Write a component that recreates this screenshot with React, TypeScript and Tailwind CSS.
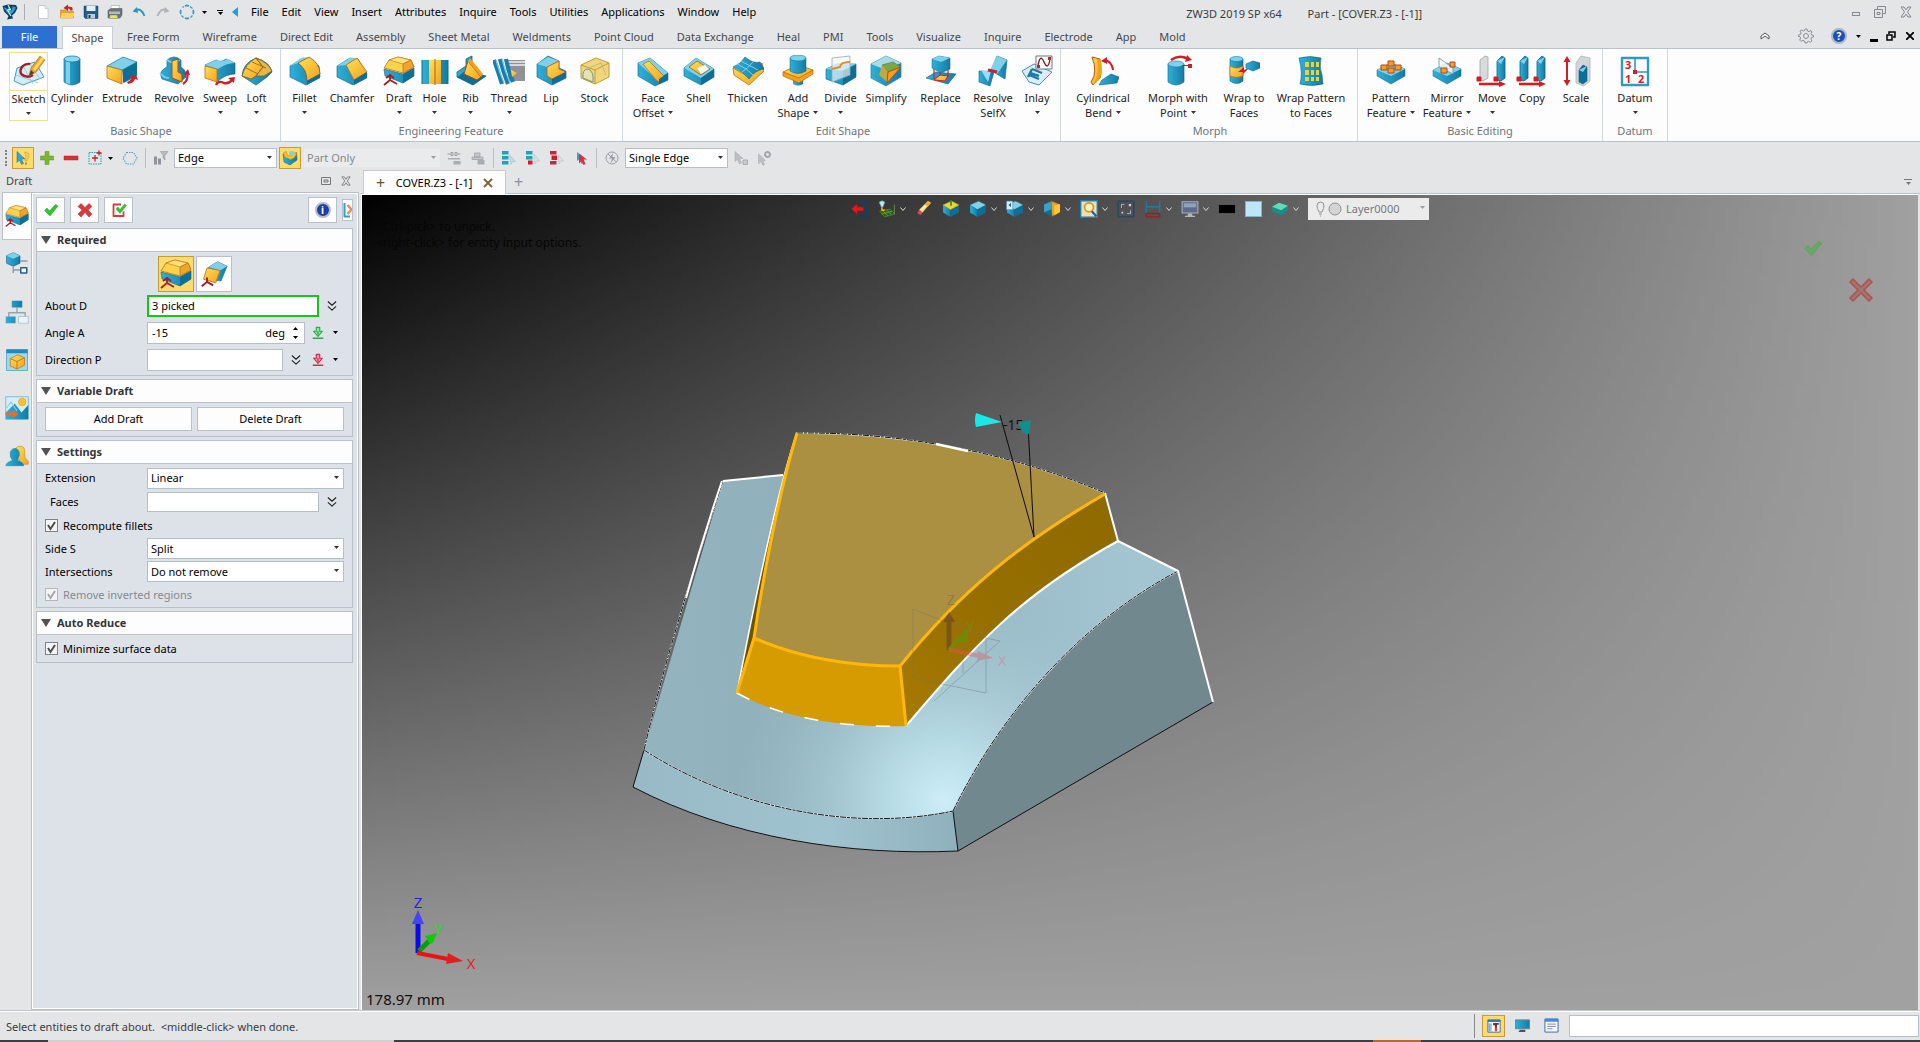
import type { ReactNode } from 'react';
import clsx from 'clsx';

// [path, fill, stroke, stroke width]
type Shape = [string, string, string?, number?];

const T = 'url(#teal)';
const Y = 'url(#gold)';
const D = '#0d6f96';
const L = '#7fd0ea';
const O = '#f2a11c';
const R = '#cf1f26';
const N = 'none';
const W = '#f4f8fb';
const G = '#9b9ea3';
const B = '#2c5f86';

const CUBE: Shape[] = [
  ['M2 9 17 2 30 9 15 17z', L, '#3f9cbd', 0.6],
  ['M2 9 15 17V30L2 22z', T],
  ['M15 17 30 9V22L15 30z', D],
];

const ICONS: Record<string, Shape[]> = {
  sketch: [
    ['M4 13 22 7 31 22 10 30 1 26z', '#d5ebf6', '#4a9cc4', 1],
    ['M3 20 25 28M10 11 20 29M17 9 27 24', N, '#8cc4de', 0.8],
    ['M17 9C11 8 6 13 8 19M8 19Q14 24 20 20', N, '#a51d26', 2.4],
    ['M16 21 18 13 27 1 32 5 23 17z', '#f2a11c', '#a0641a', 0.6],
    ['M20 14 29 2 31 4 22 16z', '#ffdc6b'],
    ['M16 21 18 15 21 18z', '#5a3a1a'],
  ],
  cylinder: [
    ['M8 4V27Q16 33 24 27V4z', T, '#0c6284', 0.6],
    ['M10 5V28L14 29V6z', L],
    ['M8 4A8 3 0 1 0 24 4A8 3 0 1 0 8 4', '#8ed9ef', '#187ca0', 0.8],
  ],
  extrude: [
    ['M1 11 17 2 31 7V21L18 28 16 15z', T],
    ['M1 11 17 2 31 7 16 15z', L, '#187ca0', 0.6],
    ['M1 11 16 15V29L1 23z', Y, '#c06a10', 0.8],
    ['M17 15 31 7V19L17 28z', D],
    ['M22 29Q28 28 29 24L32 25 30 20 23 21 26 23Q24 26 21 27z', R],
  ],
  revolve: [
    ['M9 5Q16-1 23 5V12Q29 16 28 22L20 29 4 24Q0 16 9 12z', T, '#0c6284', 0.6],
    ['M9 5Q16 10 22 5M2 18Q6 23 11 23', N, L, 1.6],
    ['M14 6 20 4V17L24 19V27L14 23z', Y, '#b3461c', 1],
    ['M25 29Q31 25 29 17', N, R, 2.2],
    ['M26 19 30 14 32 20z', R],
  ],
  sweep: [
    ['M1 10 12 5Q17 8 22 4L31 8V19Q22 19 14 26z', T, '#0c6284', 0.6],
    ['M1 10 12 5Q18 8 23 4L31 8Q22 8 14 14z', L],
    ['M1 11 13 14V27L1 23z', Y, '#c06a10', 0.8],
    ['M12 30Q14 25 20 28 25 29 28 25', N, R, 2.4],
    ['M24 23 31 22 30 28z', R],
  ],
  loft: [
    ['M1 21Q2 8 15 3 29 7 31 17L26 22 15 30z', T, '#0c6284', 0.7],
    ['M1 21Q4 9 15 3L22 12 15 21 10 24z', Y, '#8a5a14', 0.8],
    ['M15 3Q27 7 31 16L23 21 15 21 22 12z', '#e6b64a', '#8a5a14', 0.8],
    ['M5 13 17 19M11 7 25 13', N, '#8a5a14', 0.8],
  ],
  fillet: [
    ['M1 11 14 3 30 11 31 22 17 30 1 22z', T, '#0c6284', 0.6],
    ['M1 11 12 3 20 2 9 8z', L],
    ['M9 8 20 2Q31 8 31 19L18 26Q18 14 9 8z', Y, '#8a5a14', 0.8],
    ['M18 26 31 19V23L18 30z', D],
  ],
  chamfer: [
    ['M1 11 14 3 22 4 31 19 30 23 17 30 1 22z', T, '#0c6284', 0.6],
    ['M1 11 14 3 21 3 10 10z', L],
    ['M10 10 21 3 31 17 18 25z', Y, '#b36a1c', 0.8],
    ['M18 25 31 17V23L18 30z', D],
  ],
  draft: [
    ['M1 14 20 19 31 13V21L20 28 2 21z', T, '#0c6284', 0.6],
    ['M20 19 31 13V21L20 28z', D],
    ['M1 13 6 5 15 2 28 5 31 12 20 18z', '#ffd24a', '#b3701c', 0.8],
    ['M6 5 15 2 28 5 20 9z', '#ffe27a', '#c0822a', 0.7],
    ['M20 9 28 5 31 12 20 18z', '#f0a52a', '#b3701c', 0.7],
    ['M7 19V25M7 25 1 30M7 25 14 29M3 23 7 20 11 23', N, '#a51d26', 1.8],
  ],
  hole: [
    ['M3 5H29V29H3z', T],
    ['M10 5H22V29H10z', Y],
    ['M16 4V30', N, '#a06a12', 1],
    ['M3 5V29M29 5V29', N, D, 1],
  ],
  rib: [
    ['M11 4 17 1V19L31 21 18 30 2 22V17L11 11z', T, '#0c6284', 0.8],
    ['M2 22 13 14 31 21 18 30z', D],
    ['M13 6 26 22 22 25 9 19z', Y, '#b3461c', 1],
    ['M15 3 28 19 26 22 13 6z', O],
  ],
  thread: [
    ['M15 5H32V26H15z', '#8d9399'],
    ['M15 7H32M15 10H32', N, '#d5d9dc', 2],
    ['M1 5Q5 16 9 29M7 4Q10 16 15 29M13 4Q15 16 20 27', N, '#177fae', 4.2],
    ['M3 5Q6 16 11 28M9 4Q12 16 17 28', N, '#7cc8e8', 1.2],
    ['M18 15 24 18 19 22z', Y],
  ],
  lip: [
    ['M2 9 13 1 24 6V13L31 16V23L17 30 2 22z', T, '#0c6284', 0.6],
    ['M2 9 13 2 24 6 12 12z', L],
    ['M12 12 24 6V14L31 17 17 24 12 21z', Y, '#c26012', 0.9],
    ['M17 24 31 17V23L17 30z', D],
  ],
  stock: [
    ['M2 10 17 3 30 8V22L16 29 2 23z', '#f0d57c', '#c69a32', 1],
    ['M2 10 16 15 30 8M16 15V29', N, '#c69a32', 1],
    ['M4 23Q3 14 9 14 15 16 14 27z', '#e9e0b4', '#6f9a8a', 1],
    ['M10 13 22 8 27 20', N, '#a6b48a', 0.8],
  ],
  faceOffset: [
    ['M1 8 13 3 31 18V25L18 31 1 21z', T, '#0c6284', 0.6],
    ['M1 8 13 3 31 18 19 24z', L],
    ['M6 9 12 6 27 21 22 27 19 25z', Y, '#b3701c', 0.8],
    ['M22 24 31 18V25L22 29z', D],
  ],
  shell: [
    ['M1 13 13 3 31 14V22L18 30 1 21z', T, '#0c6284', 0.6],
    ['M1 13 13 3 31 14 18 23z', L],
    ['M6 12 14 6 27 14 18 20z', Y, '#a55b12', 0.8],
    ['M14 13 22 10 26 14 18 19z', W],
    ['M18 23 31 14V22L18 30z', D],
  ],
  thicken: [
    ['M1 13 17 22 30 8 32 16 17 30 2 20z', Y, '#c06a10', 0.8],
    ['M1 12Q9 9 13 2 21 9 28 7L32 14Q23 15 17 24 12 17 1 12z', T, '#0c6284', 0.6],
    ['M5 9Q15 13 21 20M9 6Q18 11 26 15M22 6Q15 14 10 17', N, '#9adcf2', 0.8],
  ],
  addShape: [
    ['M11 18V29Q16 32 21 29V18z', T],
    ['M1 17 16 10 31 15 17 24z', Y, '#c06a10', 0.8],
    ['M1 17 17 23 31 15V19L17 28 1 21z', O, '#b5550f', 0.6],
    ['M8 3V16Q16 21 24 16V3z', T, '#0c6284', 0.5],
    ['M8 3A8 3 0 1 0 24 3A8 3 0 1 0 8 3', L, '#187ca0', 0.6],
  ],
  divide: [
    ['M1 14 12 9 31 9V22L18 30 1 24z', T, '#0c6284', 0.6],
    ['M1 14 12 9 31 9 17 16z', L],
    ['M18 16 31 10V22L18 30z', D],
    ['M7 3 25 1V20L7 27z', '#f4f8fbaa', '#9aa7b2', 0.8],
    ['M7 14 15 12Q15 7 25 7', N, '#e28c2b', 2],
  ],
  simplify: [
    ['M1 9 16 1 31 8V22L16 31 1 23z', T, '#3a8cab', 0.8],
    ['M1 9 16 1 31 8 16 15z', '#a8dbea'],
    ['M12 10 23 7 31 12 18 17z', '#7aa64a', '#4e8a30', 0.7],
    ['M12 10 18 17 17 27 9 20z', '#c6a640'],
    ['M18 17 31 12 17 28z', O, '#c14a14', 1],
  ],
  replace: [
    ['M1 23 11 17 31 19 23 29z', T, '#0c6284', 0.6],
    ['M9 25 15 20 23 21 20 26z', Y, R, 1],
    ['M9 13V24M23 13V22M15 16V20', N, R, 1.2],
    ['M7 4 14 1 25 3V14L16 18 7 13z', T, '#0c6284', 0.5],
    ['M7 4 14 1 25 3 16 7z', L],
  ],
  resolve: [
    ['M2 16 17 17 13 31 2 27z', T, '#0c6284', 0.6],
    ['M15 13 20 1 30 5 28 24 18 18z', T, '#0c6284', 0.6],
    ['M20 1 30 5 20 19 13 15z', L],
    ['M4 15 14 16 11 27z', '#9adcf2'],
    ['M11 15 20 17', N, R, 3],
  ],
  inlay: [
    ['M1 16 13 9 31 17 18 30 8 27z', '#d9eef8', '#3f90b5', 1],
    ['M11 14 21 18M8 20 18 24M11 14 8 20 7 22M9 18 18 21', N, '#1d7ba6', 2.4],
    ['M15 1H31V14H15z', '#fff', '#6d7780', 1],
    ['M17 11Q19-2 23 7T29 4', N, '#7a1f2c', 1.4],
    ['M16 10H19V13H16zM27 2H30V5H27z', R],
  ],
  bend: [
    ['M15 25 24 19 32 22 30 28 12 30z', T, '#0c6284', 0.6],
    ['M5 2 13 4Q15 18 13 23L6 30 4 27Q11 17 5 2z', Y, '#b5550f', 1],
    ['M10 4 14 5Q16 18 12 25L6 30Q13 18 10 4z', O],
    ['M17 5Q25 6 26 15', N, R, 2],
    ['M14 6 20 2 20 9z', R],
  ],
  morph: [
    ['M6 9V27Q14 33 22 27V9z', T, '#0c6284', 0.6],
    ['M6 9A8 3 0 1 0 22 9A8 3 0 1 0 6 9', L, '#187ca0', 0.6],
    ['M9 5Q17-1 26 4', N, R, 2.6],
    ['M25 0 30 5 23 7z', R],
    ['M26 9H30V13H26zM20 10H28V11H20z', R],
  ],
  wrap: [
    ['M2 4V26Q9 31 15 26V4z', T, '#0c6284', 0.6],
    ['M2 4A6.5 2.500 0 1 0 15 4A6.500 2.500 0 1 0 2 4', L, '#187ca0', 0.6],
    ['M2 11Q9 15 15 11V21Q9 24 2 21z', Y, '#b5550f', 0.6],
    ['M10 17 16 12V15L21 13 15 19V17z', R],
    ['M18 9 25 6 32 8V13L25 16 18 13z', T, '#0c6284', 0.6],
  ],
  wrapPattern: [
    ['M4 3Q15 0 26 3 24 12 27 20L28 29Q16 32 5 29 8 18 4 3z', T, '#0c6284', 0.6],
    ['M10 7H14V12H10zM16 7H19V12H16zM21 7H24V12H21zM10 15H14V20H10zM16 15H19V20H16zM21 15H24V20H21zM10 22H14V26H10zM16 22H19V26H16zM21 22H24V26H21z', '#e5d53c'],
  ],
  pattern: [
    ['M2 15 16 8 30 14V21L16 29 2 21z', T, '#0c6284', 0.5],
    ['M2 15 16 8 30 14 16 21z', L],
    ['M13 6H19V11H13zM6 10H12V15H6zM20 10H26V15H20zM13 13H19V18H13z', O, '#b3461c', 1],
  ],
  mirror: [
    ['M2 15 16 8 30 14V21L16 29 2 21z', T, '#0c6284', 0.5],
    ['M2 15 16 8 30 14 16 21z', L],
    ['M8 3 22 13V19L8 12z', '#f4f8fbcc', '#6f8fa3', 0.8],
    ['M10 13H16V18H10zM19 7H24V12H19z', O, '#b3461c', 1],
  ],
  move: [
    ['M4 5 9 1 12 2V23L7 26 4 25z', '#d8dadd', '#9ea2a6', 0.8],
    ['M21 6 26 1 29 3V23L25 26 21 25z', T, '#0c6284', 0.8],
    ['M21 6 29 2 25 9z', L],
    ['M1 22H5V26H1zM18 22H22V26H18z', R, R, 1],
    ['M3 29H24', N, R, 2.6],
    ['M23 26 30 29 23 32z', R],
  ],
  copy: [
    ['M4 6 9 1 12 3V23L8 26 4 25z', T, '#0c6284', 0.8],
    ['M21 6 26 1 29 3V23L25 26 21 25z', T, '#0c6284', 0.8],
    ['M4 6 12 2 8 9zM21 6 29 2 25 9z', L],
    ['M1 22H5V26H1zM18 22H22V26H18z', R, R, 1],
    ['M3 29H24', N, R, 2.6],
    ['M23 26 30 29 23 32z', R],
  ],
  scale: [
    ['M7 4V28', N, R, 2],
    ['M3.500 7 7 1 10.500 7zM3.500 25 7 31 10.500 25z', R],
    ['M16 8 21 1 30 3V26L24 31 16 28z', '#d3d6d9', '#aeb2b6', 0.8],
    ['M19 15 23 10 27 12V26L23 29 19 27z', D, '#0c6284', 0.6],
    ['M19 15 27 11 23 17z', L],
  ],
  datum: [
    ['M3 3H29V30H3z', '#fff', '#2d9bc4', 2.4],
    ['M16 3V17H29', N, '#2d9bc4', 1.6],
    ['M14 15H18V19H14z', R],
  ],
  newDoc: [['M7 3H20L26 9V29H7z', '#fff', '#b6bcc3', 1.4], ['M20 3V9H26', '#e4e8ec', '#b6bcc3', 1.2]],
  open: [
    ['M3 12H13L16 15H29V28H3z', O, '#c07a14', 1],
    ['M6 18H31L28 28H3z', '#ffd25c'],
    ['M27 13V8Q26 5 18 5V1L9 8 18 14V9Q22 9 23 13z', R],
  ],
  save: [
    ['M2 4H30V29H5L2 26z', '#1f5f86', '#123f5c', 1],
    ['M7 4H25V14H7z', '#dff0f8'],
    ['M9 20H24V29H9z', '#c3cbd2'],
    ['M11 22H15V28H11z', '#1f3f5c'],
  ],
  print: [
    ['M9 3H25L23 12H6z', '#fff', '#8c9298', 1],
    ['M2 13 8 9H30V22L26 28H2z', '#6c7278', '#4c5258', 1],
    ['M4 15H26V20H4z', '#b4babf'],
    ['M6 22H20L22 29H5z', '#dfe86a', '#7a8288', 1],
  ],
  undo: [['M8 13Q20 6 27 24', N, '#2b94bd', 3.6], ['M3 15 12 6 14 18z', '#2b94bd']],
  redo: [['M24 13Q12 6 5 24', N, '#b0b4b8', 3.6], ['M29 15 20 6 18 18z', '#b0b4b8']],
  ring: [
    ['M12 4Q16 2 20 4M4 12Q2 16 4 20M28 12Q30 16 28 20M12 28Q16 30 20 28', N, '#3f9cbd', 3.6],
    ['M7 7 10 5M22 5 27 9M27 23 23 27M9 27 5 23', N, '#3f9cbd', 2.6],
  ],
  logo: [
    ['M1 4 12 1 28 2 31 8 26 18 20 23 22 29 10 31 13 24 4 15z', '#13405c'],
    ['M3 6 13 11 12 4 20 13 21 5 28 7 22 17 15 22 8 14z', '#2aa4d4'],
    ['M12 2 17 11 11 12 18 24', N, '#fff', 2],
  ],
  pick: [
    ['M4 3 4 25 9 20 13 29 17 27 13 18 20 18z', '#32a7d8', '#1b6f98', 1],
    ['M19 4Q29 4 28 12 27 17 24 19V22H20V18L22 12z', '#f7cf4a', '#c7962a', 1],
    ['M20 25H24V29H20z', '#b8862a'],
  ],
  plus: [['M12 3H20V12H29V20H20V29H12V20H3V12H12z', '#7cb52f', '#5f9420', 1]],
  minus: [['M2 12H30V20H2z', '#d9322f', '#b52220', 1]],
  region: [
    ['M4 5H28V28H4z', N, '#2b94bd', 2],
    ['M16 10V23M10 16H22', N, R, 2.6],
    ['M24 1V11M19 6H29', N, R, 2.6],
  ],
  hexagon: [['M9 5H23L30 16 23 28H9L2 16z', N, '#49a3c4', 2.2]],
  filter: [
    ['M2 13H8V29H2zM10 17H16V29H10z', '#8f9398'],
    ['M15 3H30L24 11V20L20 16V11z', '#b6babe', '#8f9398', 1],
  ],
  layers: [
    ['M2 8 9 14 16 12 29 5 30 20 16 30 4 24z', T, '#0c6284', 1],
    ['M3 5 9 3 11 12 20 10 18 4 30 7 24 16 17 19 5 14z', '#f3c12a', '#b98518', 1],
    ['M14 3 24 2 22 10 15 12z', L],
  ],
  link: [['M3 8H10M22 8H29M10 5H14V11H10zM18 5H22V11H18z', N, G, 2], ['M4 16H28V19H4zM15 22H29V29H15z', '#a9acb0']],
  print2: [['M9 6H20V14H9zM4 14H26V19H4z', '#c3c6c9', G, 1.4], ['M15 20H29V29H15z', '#a9acb0']],
  treeA: [['M2 2H15V9H2zM2 12H15V19H2zM2 22H15V29H2z', '#22a0b8'], ['M17 10 29 23 23 23 20 29z', '#c9dbe0', '#86bcc9', 1]],
  treeB: [['M2 2H15V9H2zM2 12H15V19H2z', '#22a0b8'], ['M6 21H15V29H6z', R], ['M18 8 29 22 23 22 20 28z', '#dce1e4', '#b2b8bc', 1]],
  treeC: [['M2 2H15V9H2zM2 22H15V29H2z', '#b4304a'], ['M5 11H16V20H5z', R], ['M19 10 29 22 23 22 20 28z', '#dce1e4', '#b2b8bc', 1]],
  redPick: [['M8 4V22L13 18 17 28 21 26 17 17 24 17z', '#2fa7cd'], ['M12 7V27L17 22 21 30 25 28 21 19 28 19z', '#d83040']],
  noFilter: [['M16 4A12 12 0 1 0 16 28A12 12 0 1 0 16 4M8 8 25 24', N, G, 2], ['M18 6 10 17H16L13 27 23 14H17z', G]],
  cursorGrey: [['M4 3V23L9 19 13 28 17 26 13 17 20 17z', '#bcbec1', '#a6a9ad', 1], ['M20 20H29V29H20z', '#c9cbce', G, 1.500]],
  cursorGear: [['M3 8V28L8 23 12 31 15 29 12 21 17 21z', '#bcbec1', '#a6a9ad', 1], ['M21 4A5 5 0 1 0 21.100 4z', N, '#a2a5a8', 4]],
  check: [['M3 17 8 12 13 18 25 5 30 8 14 28z', '#2fc42f', '#1f9a26', 1]],
  cross: [['M8 3 16 11 24 3 30 9 22 16 30 24 24 30 16 21 8 30 2 24 10 16 2 9z', '#d93a3c', '#b42226', 1]],
  apply: [['M20 5H5V28H25V19', N, '#dc3a3e', 3.6], ['M10 14 14 10 18 15 27 4 31 7 18 23z', '#2fc42f', '#1f9a26', 0.8]],
  chevrons: [['M5 4 16 14 27 4M5 17 16 27 27 17', N, '#222', 3]],
  downGreen: [['M12 3H20V12H26L16 24 6 12H12z', '#8be896', '#2fa845', 2.6], ['M4 28H28M16 12V20', N, '#2fa845', 3]],
  downRed: [['M12 3H20V12H26L16 24 6 12H12z', '#ef9ba6', '#d22c48', 2.6], ['M4 28H28M16 12V20', N, '#d22c48', 3]],
  panel: [['M3 2V29H14', N, '#2d9fc9', 4], ['M9 6 17 15 9 24', N, '#ee8a4c', 5]],
  tree: [
    ['M2 5 11 1 20 5V15L11 19 2 15z', T, '#0c6284', 0.8],
    ['M2 5 11 1 20 5 11 9z', L],
    ['M11 19V28M11 24H20M20 12H30', N, '#8e9aa6', 1.8],
    ['M21 21H29V28H21z', '#fff', B, 2],
  ],
  org: [
    ['M16 10V17M5 24V17H27V24', N, '#9aa2aa', 1.800],
    ['M9 1H23V10H9zM1 22H14V31H1z', T],
    ['M18 22H31V31H18z', '#e9f3f8', '#9fbccb', 1],
  ],
  window: [
    ['M2 2H30V30H2z', '#9fd8ec', '#3fa0c4', 1],
    ['M2 2H30V7H2z', '#1a8db8'],
    ['M7 14 17 9 26 13V23L16 28 7 24z', Y, '#c0741a', 1],
    ['M7 14 16 18 26 13M16 18V28', N, '#c0741a', 1.2],
  ],
  scene: [
    ['M1 1H31V31H1z', '#d4eefa', '#5ab0d4', 1],
    ['M1 22 13 10 22 22 31 12V31H1z', T],
    ['M2 16 8 8 16 20', N, '#8cc9e0', 1.6],
    ['M18 8A5 5 0 1 0 28 8A5 5 0 1 0 18 8', '#ffc02e', O, 1],
    ['M1 22H10V18L18 24 10 30V26H1z', '#ee6a2a'],
  ],
  people: [
    ['M14 6Q16 2 22 3 28 5 26 13 25 18 31 23V27H22L17 18z', Y, '#d2801c', 0.8],
    ['M7 11Q9 5 15 6 20 9 19 15 17 20 17 22 24 24 25 29H1Q2 24 10 22 6 17 7 11z', T, '#2a86a8', 0.800],
  ],
  face: [
    ['M10 8 20 2 31 7 24 24 9 22z', T, '#0c6284', 0.6],
    ['M10 8 20 2 31 7 23 12z', L],
    ['M8 9 23 12 18 26 4 22z', Y, '#c0741a', 1],
    ['M8 20V25M8 25 2 30M8 25 15 29', N, '#a51d26', 2.2],
  ],
  exit: [['M14 3H27V29H14', N, '#113f66', 3], ['M1 16 11 7V13H22V19H11V25z', '#ee1414']],
  tag: [
    ['M3 20 21 16 30 25 12 30z', '#2f5a20', '#4d8a26', 1.4],
    ['M8 19 18 28M15 18 24 26M6 25 25 20M29 8V25', N, '#6cae34', 1.4],
    ['M2 4Q8-1 12 4L9 12 6 13z', '#bfe3f2', '#4d97b8', 1],
    ['M7 13V18L12 18', N, O, 3],
  ],
  eraser: [['M4 23 10 27 13 22 8 17z', '#e04848'], ['M8 17 13 22 28 5 23 2z', '#f8e8a4', '#d6b85c', 1], ['M18 8 23 12 27 6 23 2z', '#f3a72a']],
  yellowBox: [...CUBE, ['M2 9 17 2 30 9 15 17z', '#e8d830', '#b8a018', 1], ['M16 0V10', N, '#46802a', 3]],
  cube: CUBE,
  views: [...CUBE, ['M1 2H12V17H1z', '#dceef6', '#4d97b8', 1], ['M9 5 4 9 9 13z', '#29719c']],
  section: [['M2 8 15 2V17L2 22z', '#34a4cf'], ['M15 2 30 8V22L16 29 15 17z', O, '#b96812', 1], ['M20 10 30 7V21L20 27z', '#ffc93c'], ['M2 22 15 17 16 29z', D]],
  zoom: [['M1 1H31V31H1z', '#e9e0b8', '#1e7fb0', 3], ['M8 13A8 8 0 1 0 24 13A8 8 0 1 0 8 13', '#fff1b8', '#d99520', 3], ['M21 20 29 29', N, '#2c5aa0', 4]],
  fit: [['M2 2H30V30H2z', N, '#22485e', 2.4], ['M8 14V8H13M24 18V24H18', N, '#8fb4c6', 1.800], ['M21 7H25V11H21zM8 21H11V24H8z', '#bfd8e4']],
  measure: [['M4 2V24M28 2V24M4 12H28', N, '#1e7ca6', 2.4], ['M4 24H28V30H4z', N, '#a01c22', 2.4]],
  monitor: [['M2 3H30V23H2z', '#5c6d8c', '#a9adb4', 2], ['M5 6H27V13H5z', '#8fa3c0'], ['M12 24H20V28H25V30H7V28H12z', '#b4b7bb']],
  green: [['M2 12 14 5 30 10V18L18 27 2 20z', '#1c8c86'], ['M2 12 14 5 30 10 18 18z', '#5fdcb4']],
  screen: [['M1 4H31V23H1z', T, '#74808a', 2], ['M10 25H22V30H8V27H10z', '#4d5358']],
  tools: [['M2 2H30V30H2z', '#fff', '#2c5fa8', 2], ['M2 2H30V7H2z', '#3f74c0'], ['M5 10V28M9 10V28', N, '#3f74c0', 2], ['M14 9H27V13H23V26H18V14H14z', '#5b3a34'], ['M18 18H23V28H18z', '#d6402a']],
  list: [['M2 2H30V30H2z', '#f4f8fd', '#3566b0', 2], ['M2 2H30V8H2z', '#4f86d0'], ['M7 13H25M7 18H25M7 23H18', N, '#6b7c98', 1.800]],
};

function Icon({ name, className = 'size-4' }: { name: string; className?: string }) {
  return (
    <svg viewBox="0 0 32 32" className={clsx('shrink-0', className)} aria-hidden="true">
      {ICONS[name].map(([d, fill, stroke, width], i) => (
        <path
          key={i}
          d={d}
          fill={fill}
          stroke={stroke}
          strokeWidth={width}
          strokeLinejoin="round"
          strokeDasharray={name === 'hexagon' || (name === 'region' && i === 0) ? '3 2' : undefined}
        />
      ))}
      {name === 'datum' && (
        <g fill={R} fontSize="11" fontWeight="700" fontFamily="Open Sans, sans-serif">
          <text x="6" y="14">3</text>
          <text x="6" y="28">1</text>
          <text x="19" y="28">2</text>
        </g>
      )}
    </svg>
  );
}

function Caret({ className }: { className?: string }) {
  return (
    <svg viewBox="0 0 5 3" className={clsx('h-[3px] w-[5px] shrink-0', className)} aria-hidden="true">
      <path d="M0 0h5L2.500 3z" fill="currentColor" />
    </svg>
  );
}

function Sep() {
  return <span className="mx-0.5 h-5 w-px shrink-0 bg-[#b9bec4]" />;
}

const MENUS = ['File', 'Edit', 'View', 'Insert', 'Attributes', 'Inquire', 'Tools', 'Utilities', 'Applications', 'Window', 'Help'];

const TABS = [
  'Free Form', 'Wireframe', 'Direct Edit', 'Assembly', 'Sheet Metal', 'Weldments', 'Point Cloud', 'Data Exchange',
  'Heal', 'PMI', 'Tools', 'Visualize', 'Inquire', 'Electrode', 'App', 'Mold',
];

type Tool = { icon: string; label: string; second?: string; menu?: boolean; w: string };

const RIBBON: { title: string; pad: string; tools: Tool[] }[] = [
  {
    title: 'Basic Shape',
    pad: 'pl-[9px] pr-[7px]',
    tools: [
      { icon: 'sketch', label: 'Sketch', menu: true, w: 'w-[39px]' },
      { icon: 'cylinder', label: 'Cylinder', menu: true, w: 'w-12' },
      { icon: 'extrude', label: 'Extrude', w: 'w-[52px]' },
      { icon: 'revolve', label: 'Revolve', w: 'w-[52px]' },
      { icon: 'sweep', label: 'Sweep', menu: true, w: 'w-10' },
      { icon: 'loft', label: 'Loft', menu: true, w: 'w-[33px]' },
    ],
  },
  {
    title: 'Engineering Feature',
    pad: 'pl-[5px] pr-1.5',
    tools: [
      { icon: 'fillet', label: 'Fillet', menu: true, w: 'w-[37px]' },
      { icon: 'chamfer', label: 'Chamfer', w: 'w-[58px]' },
      { icon: 'draft', label: 'Draft', menu: true, w: 'w-9' },
      { icon: 'hole', label: 'Hole', menu: true, w: 'w-[35px]' },
      { icon: 'rib', label: 'Rib', menu: true, w: 'w-[37px]' },
      { icon: 'thread', label: 'Thread', menu: true, w: 'w-10' },
      { icon: 'lip', label: 'Lip', w: 'w-11' },
      { icon: 'stock', label: 'Stock', w: 'w-[43px]' },
    ],
  },
  {
    title: 'Edit Shape',
    pad: 'pl-[7px] pr-1',
    tools: [
      { icon: 'faceOffset', label: 'Face', second: 'Offset', menu: true, w: 'w-[46px]' },
      { icon: 'shell', label: 'Shell', w: 'w-[45px]' },
      { icon: 'thicken', label: 'Thicken', w: 'w-[53px]' },
      { icon: 'addShape', label: 'Add', second: 'Shape', menu: true, w: 'w-12' },
      { icon: 'divide', label: 'Divide', menu: true, w: 'w-[37px]' },
      { icon: 'simplify', label: 'Simplify', w: 'w-[54px]' },
      { icon: 'replace', label: 'Replace', w: 'w-[55px]' },
      { icon: 'resolve', label: 'Resolve', second: 'SelfX', w: 'w-[50px]' },
      { icon: 'inlay', label: 'Inlay', menu: true, w: 'w-[38px]' },
    ],
  },
  {
    title: 'Morph',
    pad: 'pl-[7px] pr-[5px]',
    tools: [
      { icon: 'bend', label: 'Cylindrical', second: 'Bend', menu: true, w: 'w-[70px]' },
      { icon: 'morph', label: 'Morph with', second: 'Point', menu: true, w: 'w-20' },
      { icon: 'wrap', label: 'Wrap to', second: 'Faces', w: 'w-[52px]' },
      { icon: 'wrapPattern', label: 'Wrap Pattern', second: 'to Faces', w: 'w-[82px]' },
    ],
  },
  {
    title: 'Basic Editing',
    pad: 'px-[5px]',
    tools: [
      { icon: 'pattern', label: 'Pattern', second: 'Feature', menu: true, w: 'w-14' },
      { icon: 'mirror', label: 'Mirror', second: 'Feature', menu: true, w: 'w-14' },
      { icon: 'move', label: 'Move', menu: true, w: 'w-[34px]' },
      { icon: 'copy', label: 'Copy', w: 'w-[46px]' },
      { icon: 'scale', label: 'Scale', w: 'w-[42px]' },
    ],
  },
  { title: 'Datum', pad: 'px-1', tools: [{ icon: 'datum', label: 'Datum', menu: true, w: 'w-14' }] },
];

function TitleBar() {
  const quick = ['newDoc', 'open', 'save', 'print', 'undo', 'redo', 'ring'];
  return (
    <header className="flex h-6 items-center text-black">
      <Icon name="logo" className="ml-0.5 size-4" />
      <span className="mx-[6px] h-4 w-px bg-[#a9aeb4]" />
      {quick.map((name) => (
        <button key={name} type="button" aria-label={name} className="flex w-6 justify-center">
          <Icon name={name} />
        </button>
      ))}
      <Caret className="mr-1 ml-[3px]" />
      <button type="button" aria-label="Customize" className="mx-1 flex flex-col items-center gap-px px-0.5">
        <span className="h-px w-1.5 bg-black" />
        <Caret />
      </button>
      <svg viewBox="0 0 6 10" className="ml-[3px] h-2.5 w-1.5" aria-hidden="true">
        <path d="M6 0v10L0 5z" fill="#1a9fe0" />
      </svg>
      <nav className="ml-[13px] flex gap-[13px]">
        {MENUS.map((m) => (
          <button key={m} type="button">{m}</button>
        ))}
      </nav>
      <div className="flex-1 pt-1 text-center whitespace-pre text-[#3c3c3c]">
        {'ZW3D 2019 SP x64         Part - [COVER.Z3 - [-1]]'}
      </div>
      <div className="flex items-center gap-3.5 pr-2 text-[#85898e]">
        <button type="button" aria-label="Minimize" className="mt-1 h-1 w-2 border border-current" />
        <button type="button" aria-label="Restore">
          <svg viewBox="0 0 12 12" className="size-3" fill="none" stroke="currentColor">
            <path d="M3.500 3V.5h8v7H9M.5 3.500h8v8h-8zM3 6.500h3v2H3z" />
          </svg>
        </button>
        <button type="button" aria-label="Close">
          <svg viewBox="0 0 12 12" className="size-3" fill="none" stroke="currentColor">
            <path d="M1 1h3l2 3 2-3h3L7.500 6 11 11H8L6 8l-2 3H1l3.500-5z" />
          </svg>
        </button>
      </div>
    </header>
  );
}

function RibbonTabs() {
  return (
    <div className="flex h-6 items-end pl-0.5 text-[#45484d]">
      <button type="button" className="h-[22px] w-[55px] bg-[#2f6fd0] text-white">File</button>
      <button type="button" className="z-10 -mb-px ml-[5px] h-[23px] w-[51px] border-t border-r border-l border-[#c8ced4] bg-[#fdfdfd]">
        Shape
      </button>
      <div className="ml-[3px] flex gap-px">
        {TABS.map((t) => (
          <button key={t} type="button" className="h-[22px] px-[11px] whitespace-nowrap">{t}</button>
        ))}
      </div>
      <div className="ml-auto flex h-6 items-center pr-1.5 text-black">
        <button type="button" aria-label="Collapse ribbon" className="mr-7">
          <svg viewBox="0 0 10 8" className="h-2 w-2.5" fill="#fff" stroke="#555">
            <path d="M1 4 5 1l4 3v3L5 4 1 7z" />
          </svg>
        </button>
        <button type="button" aria-label="Settings" className="mr-[17px]">
          <svg viewBox="0 0 16 16" className="size-4" fill="none" stroke="#8b8f94">
            <circle cx="8" cy="8" r="2.500" />
            <path d="M7 1h2l.5 2 1.500.6L13 2.500 14 4l-1 1.500.6 1.500 1.900.5v1.500l-2 .5-.6 1.500 1 2-1.400 1.300-2-1-1.300.6L9 15H7l-.5-2-1.500-.6-2 1L1.700 12l1-2L2 8.800l-1.500-.3V7l2-.5.600-1.500L2 3.200 3.400 2l2 1L6.500 2.600z" />
          </svg>
        </button>
        <button type="button" aria-label="Help" className="flex size-4 items-center justify-center rounded-full border-2 border-[#a9b6cc] bg-[#1f4fb4] text-[10px] font-bold text-white">
          ?
        </button>
        <Caret className="mx-[9px]" />
        <button type="button" aria-label="Minimize document" className="mt-2 h-[3px] w-2 bg-black" />
        <button type="button" aria-label="Restore document" className="mr-2.5 ml-2">
          <svg viewBox="0 0 10 10" className="size-2.5" fill="none" stroke="#000" strokeWidth="1.500">
            <path d="M3 3V1h6v5H7M1 4h5v5H1z" />
          </svg>
        </button>
        <button type="button" aria-label="Close document">
          <svg viewBox="0 0 8 8" className="size-2" stroke="#000" strokeWidth="1.800">
            <path d="m0 0 8 8M8 0 0 8" />
          </svg>
        </button>
      </div>
    </div>
  );
}

function ToolButton({ tool }: { tool: Tool }) {
  const { icon, label, second, menu, w } = tool;
  const active = icon === 'sketch';
  return (
    <button
      type="button"
      className={clsx(
        'flex h-[69px] flex-col items-center border pt-0.5 leading-[15px] whitespace-nowrap text-[#1e1e1e]',
        active ? 'border-[#f3df8e]' : 'border-transparent',
        w,
      )}
    >
      <Icon name={icon} className="size-8" />
      <span className={clsx('mt-[3px] self-stretch text-center', active && 'border-t border-[#f3df8e]')}>
        <span className="-mx-2">{label}</span>
      </span>
      <span className="flex h-[15px] items-center gap-1">
        {second}
        {menu && <Caret className="text-[#333]" />}
      </span>
    </button>
  );
}

function Ribbon() {
  return (
    <div className="flex h-[94px] border-y border-[#b7c3cc] bg-[#fdfdfd]">
      {RIBBON.map(({ title, pad, tools }) => (
        <section key={title} className={clsx('flex flex-col border-r border-[#d0d8df] pt-[3px]', pad)}>
          <div className="flex">
            {tools.map((t) => (
              <ToolButton key={t.label} tool={t} />
            ))}
          </div>
          <h2 className="text-center leading-5 text-[#70747c]">{title}</h2>
        </section>
      ))}
    </div>
  );
}

function Select({ value, label, className, disabled }: { value: string; label: string; className?: string; disabled?: boolean }) {
  return (
    <span className={clsx('relative block', className)}>
      <select
        aria-label={label}
        disabled={disabled}
        className={clsx(
          'block h-full w-full appearance-none border px-[3px]',
          disabled ? 'border-[#e3e5e7] bg-[#e9ebec] text-[#85888d]' : 'border-[#b5bfc9] bg-white text-black',
        )}
      >
        <option>{value}</option>
      </select>
      <Caret className={clsx('pointer-events-none absolute top-2 right-[5px]', disabled ? 'text-[#9a9da1]' : 'text-[#333]')} />
    </span>
  );
}

function ToolIcon({ name, on }: { name: string; on?: boolean }) {
  return (
    <button
      type="button"
      aria-label={name}
      className={clsx('flex size-[22px] shrink-0 items-center justify-center', on && 'border border-[#c99a3a] bg-[#fbdc6c]')}
    >
      <Icon name={name} />
    </button>
  );
}

function PickBar() {
  return (
    <div className="flex h-7 items-center gap-0.5 pt-1 pl-[5px]">
      <span className="mr-[3px] h-4 border-l-2 border-dotted border-[#7d8288]" />
      <ToolIcon name="pick" on />
      <ToolIcon name="plus" />
      <ToolIcon name="minus" />
      <ToolIcon name="region" />
      <Caret className="mr-1" />
      <ToolIcon name="hexagon" />
      <Sep />
      <ToolIcon name="filter" />
      <Select label="Filter" value="Edge" className="h-5 w-[103px]" />
      <ToolIcon name="layers" on />
      <Select label="Scope" value="Part Only" disabled className="h-5 w-[138px]" />
      <ToolIcon name="link" />
      <ToolIcon name="print2" />
      <Sep />
      <ToolIcon name="treeA" />
      <ToolIcon name="treeB" />
      <ToolIcon name="treeC" />
      <ToolIcon name="redPick" />
      <Sep />
      <ToolIcon name="noFilter" />
      <Select label="Pick mode" value="Single Edge" className="h-5 w-[103px]" />
      <ToolIcon name="cursorGrey" />
      <ToolIcon name="cursorGear" />
    </div>
  );
}

function Section({ title, body, children }: { title: string; body: string; children: ReactNode }) {
  return (
    <section className="mb-[3px] border border-[#b9c0c9] bg-[#dde2e9]">
      <h3 className="flex h-[23px] items-center gap-1.5 border-b border-[#b9c0c9] bg-[#fdfdfd] pl-1 text-[11px] font-bold text-[#33363a]">
        <svg viewBox="0 0 10 8" className="h-2 w-2.5" aria-hidden="true">
          <path d="M0 0h10L5 8z" fill="#4e5358" />
        </svg>
        {title}
      </h3>
      <div className={clsx('pr-2 pl-2', body)}>{children}</div>
    </section>
  );
}

function Row({ id, label, className, children }: { id: string; label: string; className: string; children: ReactNode }) {
  return (
    <div className={clsx('flex items-center', className)}>
      <label htmlFor={id} className="w-[102px] shrink-0">{label}</label>
      {children}
    </div>
  );
}

function FormSelect({ id, value }: { id: string; value: string }) {
  return (
    <span className="relative flex-1">
      <select id={id} className="block h-[21px] w-full appearance-none border border-[#b5bfc9] bg-white px-[3px]">
        <option>{value}</option>
      </select>
      <Caret className="pointer-events-none absolute top-2 right-[5px] text-[#333]" />
    </span>
  );
}

function Check({ label, className, disabled }: { label: string; className: string; disabled?: boolean }) {
  return (
    <label className={clsx('flex items-center gap-[5px]', disabled && 'text-[#85898f]', className)}>
      <span className="relative block size-[13px]">
        <input
          type="checkbox"
          defaultChecked
          disabled={disabled}
          className={clsx('peer block size-[13px] appearance-none border bg-[#f4f4f4]', disabled ? 'border-[#b4b8bc]' : 'border-[#7d8288]')}
        />
        <svg viewBox="0 0 13 13" className="pointer-events-none absolute inset-0 hidden peer-checked:block" fill="none" stroke={disabled ? '#a4a8ac' : '#4a4d50'} strokeWidth="2">
          <path d="m3 6 2.500 4L10 3" />
        </svg>
      </span>
      {label}
    </label>
  );
}

function More() {
  return (
    <button type="button" aria-label="More options" className="flex w-[25px] shrink-0 justify-center">
      <Icon name="chevrons" className="size-3" />
    </button>
  );
}

function DraftPanel() {
  const box = 'flex h-[26px] w-[29px] items-center justify-center border border-[#b9c0c9] bg-[#fdfdfd]';
  const field = 'h-[22px] min-w-0 flex-1 border border-[#b5bfc9] bg-white px-1';
  return (
    <aside className="flex w-[361px] shrink-0 flex-col">
      <div className="flex h-[22px] items-center justify-between pr-2.5 pl-1.5 text-[#45484d]">
        <h2>Draft</h2>
        <span className="flex items-center gap-2.5">
          <button type="button" aria-label="Float panel">
            <svg viewBox="0 0 10 8" className="h-2 w-2.5" fill="none" stroke="#777">
              <path d="M.5.5h9v7h-9zM3 3h4v2H3z" />
            </svg>
          </button>
          <button type="button" aria-label="Close panel">
            <svg viewBox="0 0 12 12" className="size-2.5" fill="none" stroke="#777">
              <path d="M1 1h3l2 3 2-3h3L7.500 6 11 11H8L6 8l-2 3H1l3.500-5z" />
            </svg>
          </button>
        </span>
      </div>
      <div className="flex flex-1">
        <nav className="flex w-[31px] flex-col pl-0.5">
          {['draft', 'tree', 'org', 'window', 'scene', 'people'].map((name, i) => (
            <button
              key={name}
              type="button"
              aria-label={name}
              className={clsx('flex h-12 items-center justify-center', i === 0 && 'border border-r-0 border-[#b9c0c9] bg-[#fdfdfd]')}
            >
              <Icon name={name} className="size-6" />
            </button>
          ))}
        </nav>
        <div className="w-[328px] border border-[#b9c0c9] bg-[#dde2e9] pt-1 pr-[5px] pl-1 shadow-[inset_0_0_0_1px_#fff]">
          <div className="mb-[5px] flex items-center">
            <button type="button" aria-label="OK" className={box}><Icon name="check" /></button>
            <button type="button" aria-label="Cancel" className={clsx(box, 'mx-[5px]')}><Icon name="cross" /></button>
            <button type="button" aria-label="Apply" className={box}><Icon name="apply" /></button>
            <button type="button" aria-label="Info" className={clsx(box, 'mr-[5px] ml-auto')}>
              <span className="flex size-4 items-center justify-center rounded-full border-2 border-[#b4bccb] bg-[#1c3fa4] text-[10px] font-bold text-white">
                i
              </span>
            </button>
            <button type="button" aria-label="Expand" className="flex h-[22px] w-[11px] items-center overflow-hidden border border-[#b9c0c9] bg-[#fdfdfd]">
              <Icon name="panel" className="size-4" />
            </button>
          </div>
          <Section title="Required" body="pt-1 pb-0.5">
            <div className="flex gap-0.5 pl-[113px]">
              <button type="button" aria-label="Draft from edge" className="flex size-9 items-center justify-center border border-[#c99a3a] bg-[#fbdc6c]">
                <Icon name="draft" className="size-8" />
              </button>
              <button type="button" aria-label="Draft from face" className="flex size-9 items-center justify-center border border-[#b9c0c9] bg-[#fdfdfd]">
                <Icon name="face" className="size-7" />
              </button>
            </div>
            <Row id="about" label="About D" className="h-[27px]">
              <input id="about" defaultValue="3 picked" className="h-[22px] min-w-0 flex-1 border-2 border-[#18c618] bg-white px-[3px]" />
              <More />
            </Row>
            <Row id="angle" label="Angle A" className="h-[27px]">
              <span className="flex h-[22px] min-w-0 flex-1 items-center border border-[#b5bfc9] bg-white pr-1.5 pl-1">
                <input id="angle" defaultValue="-15" className="min-w-0 flex-1" />
                <span className="mr-2">deg</span>
                <span className="flex flex-col gap-1.5">
                  <Caret className="rotate-180" />
                  <Caret />
                </span>
              </span>
              <Icon name="downGreen" className="ml-1.5 size-[14px]" />
              <Caret className="mr-1.5 ml-2" />
            </Row>
            <Row id="direction" label="Direction P" className="h-[27px]">
              <input id="direction" className={field} />
              <More />
              <Icon name="downRed" className="ml-[3px] size-[14px]" />
              <Caret className="mr-1.5 ml-2" />
            </Row>
          </Section>
          <Section title="Variable Draft" body="flex gap-[5px] pt-1 pb-[5px]">
            <button type="button" className="h-6 flex-1 border border-[#b9c0c9] bg-[#fdfdfd]">Add Draft</button>
            <button type="button" className="h-6 flex-1 border border-[#b9c0c9] bg-[#fdfdfd]">Delete Draft</button>
          </Section>
          <Section title="Settings" body="pt-0.5 pb-px">
            <Row id="extension" label="Extension" className="h-6"><FormSelect id="extension" value="Linear" /></Row>
            <div className="flex h-6 items-center">
              <label htmlFor="faces" className="w-[102px] shrink-0 pl-[5px]">Faces</label>
              <input id="faces" className="h-5 min-w-0 flex-1 border border-[#b5bfc9] bg-white px-1" />
              <More />
            </div>
            <Check label="Recompute fillets" className="h-[23px]" />
            <Row id="side" label="Side S" className="h-[23px]"><FormSelect id="side" value="Split" /></Row>
            <Row id="intersections" label="Intersections" className="h-[23px]">
              <FormSelect id="intersections" value="Do not remove" />
            </Row>
            <Check label="Remove inverted regions" className="h-[23px]" disabled />
          </Section>
          <Section title="Auto Reduce" body="">
            <Check label="Minimize surface data" className="h-[27px]" />
          </Section>
        </div>
      </div>
    </aside>
  );
}

const VIEW_TOOLS: [string, boolean][] = [
  ['exit', false], ['tag', true], ['eraser', false], ['yellowBox', false], ['cube', true], ['views', true],
  ['section', true], ['zoom', true], ['fit', false], ['measure', true], ['monitor', true],
];

function ViewMenu() {
  return (
    <svg viewBox="0 0 6 5" className="ml-1 h-[5px] w-1.5" fill="none" stroke="#d8d8d8" aria-hidden="true">
      <path d="m.5.5 2.500 3 2.500-3" />
    </svg>
  );
}

function ViewToolbar() {
  return (
    <div className="absolute inset-x-0 top-[3px] flex items-center justify-center gap-[9px]">
      {VIEW_TOOLS.map(([name, menu]) => (
        <button key={name} type="button" aria-label={name} className="flex items-center">
          <Icon name={name} className="size-[18px]" />
          {menu && <ViewMenu />}
        </button>
      ))}
      <button type="button" aria-label="Edge colour" className="h-2.5 w-[18px] border border-[#555] bg-black" />
      <button type="button" aria-label="Face colour" className="h-4 w-[17px] border border-[#7fb5cf] bg-[#bfe6f7]" />
      <button type="button" aria-label="Material" className="flex items-center">
        <Icon name="green" className="size-[18px]" />
        <ViewMenu />
      </button>
      <span className="relative flex h-[22px] w-[121px] items-center bg-[#ebebeb] pl-2">
        <svg viewBox="0 0 26 16" className="h-4 w-[26px]" fill="none" stroke="#8e9194">
          <path d="M3 11Q1 7 1 5a3.500 4 0 0 1 7 0q0 2-2 6zM3 13h3M4 15h1" />
          <circle cx="19" cy="8" r="6" fill="#d4d4d4" />
        </svg>
        <select aria-label="Layer" disabled className="ml-1 flex-1 appearance-none text-[#77797c]">
          <option>Layer0000</option>
        </select>
        <Caret className="absolute top-2 right-1 text-[#9a9da1]" />
      </span>
    </div>
  );
}

function Model() {
  const seam = (d: string) => (
    <>
      <path d={d} stroke="#dfe8ec" strokeWidth="1.500" />
      <path d={d} stroke="#161616" strokeDasharray="6 1 3 1" />
    </>
  );
  const baseTop = 'M723 481 783 475 1105 493 1118 541 1178 571C1096 614 1010 695 953 811C860 831 740 812 644 750z';
  return (
    <svg viewBox="362 195 1556 815" className="absolute inset-0 h-full w-full" fill="none" strokeLinejoin="round" role="img" aria-label="Cover part">
      <defs>
        <linearGradient id="baseTop" x1="660" y1="600" x2="1130" y2="570" gradientUnits="userSpaceOnUse">
          <stop offset="0" stopColor="#93b3be" />
          <stop offset=".35" stopColor="#8fb0bb" />
          <stop offset="1" stopColor="#a3c5d1" />
        </linearGradient>
        <radialGradient id="shine" cx="945" cy="800" r="210" gradientUnits="userSpaceOnUse">
          <stop offset="0" stopColor="#cdeef8" />
          <stop offset=".3" stopColor="#bbdfea" stopOpacity=".85" />
          <stop offset="1" stopColor="#a0c2ce" stopOpacity="0" />
        </radialGradient>
        <linearGradient id="frontFace" x1="633" y1="0" x2="958" y2="0" gradientUnits="userSpaceOnUse">
          <stop offset="0" stopColor="#98bac6" />
          <stop offset=".6" stopColor="#a0c3d0" />
          <stop offset="1" stopColor="#8fb1bd" />
        </linearGradient>
        <linearGradient id="sideGold" x1="1100" y1="500" x2="910" y2="700" gradientUnits="userSpaceOnUse">
          <stop offset="0" stopColor="#8f6a00" />
          <stop offset=".6" stopColor="#966f00" />
          <stop offset="1" stopColor="#a57800" />
        </linearGradient>
      </defs>

      {/* base body */}
      <path d={baseTop} fill="url(#baseTop)" />
      <path d={baseTop} fill="url(#shine)" />
      <path d="M644 750C740 812 860 831 953 811L958 851C850 856 730 838 633 787z" fill="url(#frontFace)" />
      <path d="M953 811C1010 695 1096 614 1178 571L1213 702 958 851z" fill="#71888f" />
      <path d="M644 750 633 787C730 838 850 856 958 851L1213 702M953 811 958 851" stroke="#101010" />
      {seam('M644 750C740 812 860 831 953 811')}
      {seam('M953 811C1010 695 1096 614 1178 571')}
      {seam('M644 750C665 660 690 580 723 481')}
      <path d="M723 481 783 475M722 481Q702 540 686 598M1118 541 1178 571 1213 702" stroke="#fff" strokeWidth="2" />

      {/* boss */}
      <path d="M797 433Q775 495 737 693L754 638z" fill="#6b5206" stroke="#fff" strokeWidth="1.500" />
      <path d="M797 433C900 432 1010 452 1105 493C1020 543 960 592 900 666C850 666 800 658 754 638C764 570 780 490 797 433z" fill="#ab9041" />
      <path d="M1105 493 1118 541C1020 595 975 645 906 726L900 666C960 592 1020 543 1105 493z" fill="url(#sideGold)" />
      <path d="M754 638C800 658 850 666 900 666L906 726C850 728 785 720 737 693z" fill="#d69b00" />
      <path d="M1105 493 1118 541C1020 595 975 645 906 726" stroke="#fff" strokeWidth="2" />
      <path d="M737 693C785 720 850 728 906 726" stroke="#fff" strokeWidth="1.500" strokeDasharray="14 22" />
      {seam('M797 433C900 432 1010 452 1105 493')}
      <path d="M936 444 968 451" stroke="#fff" strokeWidth="2.500" />
      <path d="M797 433C780 490 764 570 754 638L737 693M754 638C800 658 850 666 900 666L906 726M900 666C960 592 1020 543 1105 494" stroke="#ffb808" strokeWidth="3" />

      {/* datum triad at the origin */}
      <g opacity=".4">
        <path d="M913 609V678L986 693V638zM934 701 1000 641 986 638M963 620V673" stroke="#6c7478" />
        <path d="M949 650V618" stroke="#4a2c3c" strokeWidth="5" />
        <path d="M943 622 949 612 955 622z" fill="#4a2c3c" />
        <path d="M949 650 960 638" stroke="#35b010" strokeWidth="4" />
        <path d="M956 641 967 631 966 641z" fill="#35b010" stroke="#35b010" strokeWidth="3" />
        <path d="M949 650 980 656" stroke="#e05858" strokeWidth="4" />
        <path d="M978 651 993 658 977 661z" fill="#e05858" />
      </g>
      <g fontSize="14" fontFamily="Open Sans, sans-serif" textAnchor="middle" opacity=".6">
        <text x="951" y="605" fill="#7c6a50">Z</text>
        <text x="970" y="632" fill="#5ba01c">Y</text>
        <text x="1002" y="666" fill="#d08088">X</text>
      </g>

      {/* angle handle */}
      <path d="M1000 415 1034 537 1028 425" stroke="#0c0c0c" />
      <text x="1003" y="430" fontSize="14" fontFamily="Open Sans, sans-serif" fill="#0c0c0c">-15</text>
      <path d="M976 413 1002 422 976 427Q974 420 976 413z" fill="#19e8e8" />
      <path d="M1018 423 1031 420 1029 434 1023 433z" fill="#0f8f93" />

      {/* view triad */}
      <path d="M418 953V923" stroke="#0a0ae6" strokeWidth="5" />
      <path d="M412 924 418 910 424 924z" fill="#4646f0" />
      <path d="M419 951 431 939" stroke="#0a9a0a" strokeWidth="5" />
      <path d="M425 936 437 933 433 943 430 944z" fill="#10c810" />
      <path d="M417 953 448 959" stroke="#e81414" strokeWidth="4" />
      <path d="M448 953 463 961 446 964z" fill="#e02020" />
      <g fontSize="15" fontFamily="Open Sans, sans-serif" textAnchor="middle">
        <text x="418" y="908" fill="#2020e8">Z</text>
        <text x="439" y="934" fill="#18e018">Y</text>
        <text x="471" y="969" fill="#e81818">X</text>
      </g>
    </svg>
  );
}

function Viewport() {
  return (
    <main className="flex min-w-0 flex-1 flex-col">
      <div className="flex h-6 items-stretch border-b border-[#b7c3cc] pl-0.5">
        <div className="-mb-px flex w-[143px] items-center justify-between border border-b-0 border-[#c4cbd2] bg-[#fdfdfd] px-3 text-black">
          <span className="text-base leading-none text-[#6b5428]">+</span>
          COVER.Z3 - [-1]
          <button type="button" aria-label="Close tab">
            <svg viewBox="0 0 10 10" className="size-2.5" stroke="#7a6530" strokeWidth="1.800">
              <path d="m1 1 8 8M9 1 1 9" />
            </svg>
          </button>
        </div>
        <button type="button" aria-label="New tab" className="ml-2 text-base leading-none text-[#8f8f93]">+</button>
        <button type="button" aria-label="Tab list" className="mr-2 ml-auto flex flex-col items-center justify-center gap-0.5">
          <span className="h-px w-2 bg-[#777]" />
          <Caret className="text-[#777]" />
        </button>
      </div>
      <div className="relative mr-0.5 flex-1 overflow-hidden border-t border-l border-white bg-[#a1a1a1]">
        <div className="absolute inset-0 bg-[linear-gradient(to_right,#000,#0000)] [mask-image:linear-gradient(to_bottom,#000,#0000)]" />
        <Model />
        <p className="absolute top-6 left-3.5 text-[12px] leading-4 text-[#060606]">
          &lt;Ctrl-pick&gt; to unpick.
          <br />
          &lt;right-click&gt; for entity input options.
        </p>
        <ViewToolbar />
        <button type="button" aria-label="Accept" className="absolute top-[43px] right-[95px] opacity-50">
          <Icon name="check" className="size-5" />
        </button>
        <button type="button" aria-label="Cancel" className="absolute top-[82px] right-11">
          <svg viewBox="0 0 26 26" className="size-[26px]" fill="none" stroke="#b4504c" strokeWidth="1.500">
            <path d="M5 2 13 10 21 2 24 5 16 13 24 21 21 24 13 16 5 24 2 21 10 13 2 5z" fill="#a0545088" />
          </svg>
        </button>
        <p className="absolute bottom-0 left-1 text-[15px] leading-[22px] text-[#101010]">178.97 mm</p>
      </div>
    </main>
  );
}

function StatusBar() {
  return (
    <footer>
      <div className="flex h-[30px] items-center border-t border-[#c2c7cc] text-[#3a3d42] shadow-[inset_0_1px_0_#fff]">
        <p className="flex-1 pt-0.5 pl-1.5 whitespace-pre">{'Select entities to draft about.  <middle-click> when done.'}</p>
        <span className="h-6 w-px bg-[#85898e]" />
        <button type="button" aria-label="Tool tips" className="mx-[7px] flex h-[22px] w-[23px] items-center justify-center border border-[#c99a3a] bg-[#fbdc6c]">
          <Icon name="tools" className="size-[14px]" />
        </button>
        <button type="button" aria-label="Display" className="pr-2 pl-[3px]"><Icon name="screen" className="size-[15px]" /></button>
        <button type="button" aria-label="Message log" className="mx-1.5"><Icon name="list" className="size-[15px]" /></button>
        <input aria-label="Command" className="mr-px ml-1 h-[22px] w-[350px] border border-[#b5bfc9] bg-white px-1" />
      </div>
      <div className="flex h-0.5 bg-[#3b3e47]">
        <span className="ml-[2.500%] w-[18%] bg-[#cfd0d2]" />
        <span className="ml-[51%] w-[2.500%] bg-[#b46a30]" />
      </div>
    </footer>
  );
}

export default function App() {
  return (
    <div className="flex h-screen flex-col overflow-hidden bg-[#e3e5e7] font-['Noto_Sans','Open_Sans',sans-serif] text-[11px] leading-4 text-black">
      <svg className="absolute size-0" aria-hidden="true">
        <linearGradient id="teal" x1="0" y1="0" x2="1" y2="0">
          <stop offset="0" stopColor="#2fb0d8" />
          <stop offset="1" stopColor="#127ca6" />
        </linearGradient>
        <linearGradient id="gold" x1="0" y1="0" x2="1" y2="1">
          <stop offset="0" stopColor="#ffe05a" />
          <stop offset="1" stopColor="#f3a21c" />
        </linearGradient>
      </svg>
      <TitleBar />
      <RibbonTabs />
      <Ribbon />
      <PickBar />
      <div className="flex min-h-0 flex-1">
        <DraftPanel />
        <Viewport />
      </div>
      <StatusBar />
    </div>
  );
}
